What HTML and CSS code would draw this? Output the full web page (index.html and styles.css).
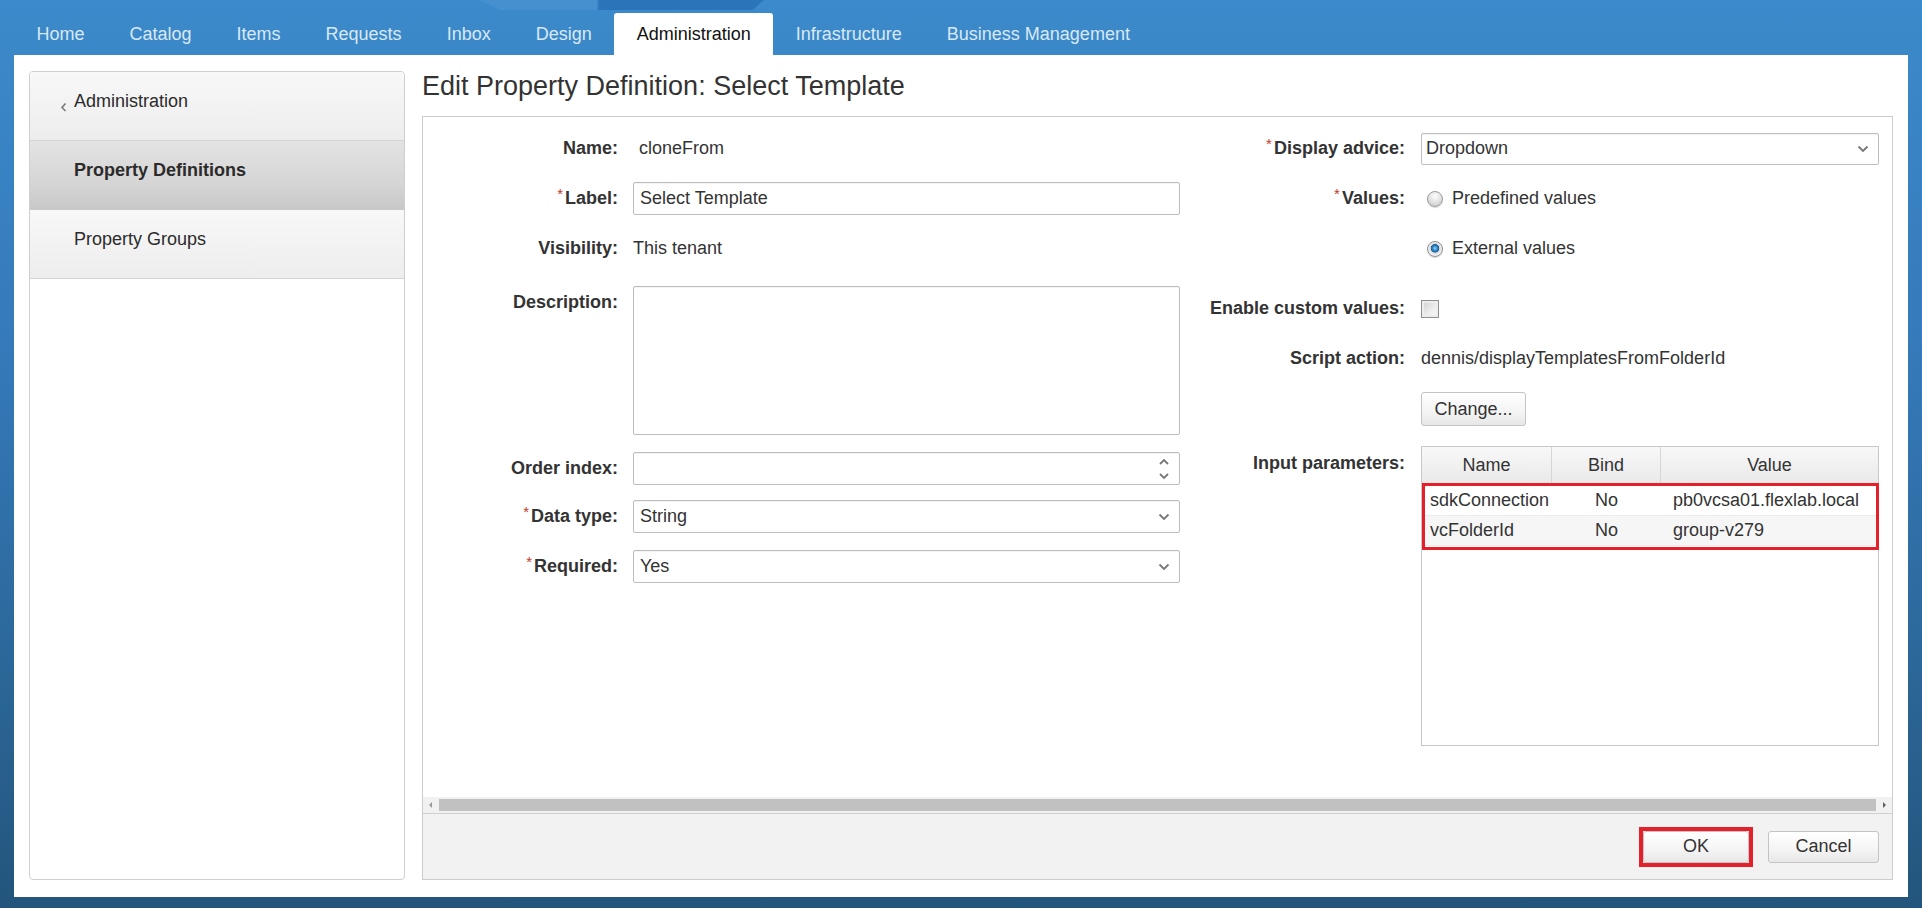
FILE: index.html
```html
<!DOCTYPE html>
<html lang="en">
<head>
  <meta charset="UTF-8">
  <title>Edit Property Definition</title>
  <link rel="stylesheet" href="styles.css">
</head>
<body>
  <div class="topbar">
    <nav class="tabs">
      <a class="tab">Home</a>
      <a class="tab">Catalog</a>
      <a class="tab">Items</a>
      <a class="tab">Requests</a>
      <a class="tab">Inbox</a>
      <a class="tab">Design</a>
      <a class="tab active">Administration</a>
      <a class="tab">Infrastructure</a>
      <a class="tab">Business Management</a>
    </nav>
  </div>

  <div class="page">
    <aside class="sidebar">
      <div class="side-item back">
        <svg class="chev" width="7" height="10" viewBox="0 0 7 10"><path d="M5.5 1.5 L2 5.5 L5.5 9" fill="none" stroke="#7a7a7a" stroke-width="1.6"/></svg>
        Administration
      </div>
      <div class="side-item selected">Property Definitions</div>
      <div class="side-item">Property Groups</div>
    </aside>

    <main class="editor">
      <h1 class="title">Edit Property Definition: Select Template</h1>

      <div class="panel">
        <div class="panel-body">
          <div class="form">
            <!-- left column -->
            <div class="col col-left">
              <div class="row">
                <label class="lbl">Name:</label>
                <div class="ctl"><span class="plain indent">cloneFrom</span></div>
              </div>
              <div class="row">
                <label class="lbl"><span class="req">*</span>Label:</label>
                <div class="ctl"><div class="input">Select Template</div></div>
              </div>
              <div class="row">
                <label class="lbl">Visibility:</label>
                <div class="ctl"><span class="plain">This tenant</span></div>
              </div>
              <div class="row row-top gap-desc">
                <label class="lbl">Description:</label>
                <div class="ctl"><div class="input textarea"></div></div>
              </div>
              <div class="row tight">
                <label class="lbl">Order index:</label>
                <div class="ctl">
                  <div class="input with-icon">
                    <span></span>
                    <svg class="spin" width="12" height="26" viewBox="0 0 12 26"><path d="M2 8 L6 4 L10 8 M2 18 L6 22 L10 18" fill="none" stroke="#777" stroke-width="1.8"/></svg>
                  </div>
                </div>
              </div>
              <div class="row">
                <label class="lbl"><span class="req">*</span>Data type:</label>
                <div class="ctl">
                  <div class="input with-icon">
                    <span>String</span>
                    <svg class="caret" width="12" height="8" viewBox="0 0 12 8"><path d="M1.5 1.5 L6 6 L10.5 1.5" fill="none" stroke="#777" stroke-width="1.8"/></svg>
                  </div>
                </div>
              </div>
              <div class="row">
                <label class="lbl"><span class="req">*</span>Required:</label>
                <div class="ctl">
                  <div class="input with-icon">
                    <span>Yes</span>
                    <svg class="caret" width="12" height="8" viewBox="0 0 12 8"><path d="M1.5 1.5 L6 6 L10.5 1.5" fill="none" stroke="#777" stroke-width="1.8"/></svg>
                  </div>
                </div>
              </div>
            </div>

            <!-- right column -->
            <div class="col col-right">
              <div class="row">
                <label class="lbl"><span class="req">*</span>Display advice:</label>
                <div class="ctl">
                  <div class="input with-icon select-sm">
                    <span>Dropdown</span>
                    <svg class="caret" width="12" height="8" viewBox="0 0 12 8"><path d="M1.5 1.5 L6 6 L10.5 1.5" fill="none" stroke="#777" stroke-width="1.8"/></svg>
                  </div>
                </div>
              </div>
              <div class="row">
                <label class="lbl"><span class="req">*</span>Values:</label>
                <div class="ctl"><span class="radio"></span><span class="plain">Predefined values</span></div>
              </div>
              <div class="row">
                <label class="lbl"></label>
                <div class="ctl"><span class="radio checked"></span><span class="plain">External values</span></div>
              </div>
              <div class="row gap-check">
                <label class="lbl">Enable custom values:</label>
                <div class="ctl"><span class="checkbox"></span></div>
              </div>
              <div class="row">
                <label class="lbl">Script action:</label>
                <div class="ctl"><span class="plain">dennis/displayTemplatesFromFolderId</span></div>
              </div>
              <div class="row">
                <label class="lbl"></label>
                <div class="ctl"><button class="btn btn-change">Change...</button></div>
              </div>
              <div class="row row-top gap-table">
                <label class="lbl lbl-table">Input parameters:</label>
                <div class="ctl">
                  <div class="params">
                    <div class="params-head">
                      <div>Name</div>
                      <div>Bind</div>
                      <div>Value</div>
                    </div>
                    <div class="params-rows">
                      <div class="params-row">
                        <div class="c-name">sdkConnection</div>
                        <div class="c-bind">No</div>
                        <div class="c-value">pb0vcsa01.flexlab.local</div>
                      </div>
                      <div class="params-row alt">
                        <div class="c-name">vcFolderId</div>
                        <div class="c-bind">No</div>
                        <div class="c-value">group-v279</div>
                      </div>
                    </div>
                  </div>
                </div>
              </div>
            </div>
          </div>
        </div>

        <div class="hscroll">
          <svg width="8" height="16" viewBox="0 0 8 16"><path d="M5 5 L2 8 L5 11 Z" fill="#9a9a9a"/></svg>
          <div class="thumb"></div>
          <svg width="8" height="16" viewBox="0 0 8 16"><path d="M3 5 L6 8 L3 11 Z" fill="#606060"/></svg>
        </div>

        <div class="panel-footer">
          <span class="ok-mark"><button class="btn btn-ok">OK</button></span>
          <button class="btn btn-cancel">Cancel</button>
        </div>
      </div>
    </main>
  </div>
</body>
</html>
```

FILE: styles.css
```css
body {
  margin: 0;
  font-family: "Liberation Sans", Arial, sans-serif;
  font-size: 18px;
  color: #333;
  background: linear-gradient(180deg, #3c8acb 0%, #3579b9 40%, #2b6697 75%, #23557c 100%);
  height: 908px;
  overflow: hidden;
}

/* top navigation */

.topbar {
  position: relative;
  height: 55px;
}

.topbar::before {
  content: '';
  position: absolute;
  left: 480px;
  top: 0;
  width: 284px;
  height: 10px;
  background: linear-gradient(90deg, #4690d0 0%, #4690d0 41%, #2c74ba 42%, #2c74ba 100%);
  clip-path: polygon(0 0, 100% 0, 96% 100%, 7% 100%);
}

.tabs {
  display: flex;
  align-items: flex-end;
  height: 55px;
  padding-left: 14px;
  box-sizing: border-box;
}

.tab {
  display: block;
  padding: 0 22.5px;
  height: 42px;
  line-height: 42px;
  color: #d9e8f6;
  cursor: pointer;
}

.tab.active {
  background: #fff;
  color: #111;
  border-radius: 3px 3px 0 0;
}

/* page frame */

.page {
  display: flex;
  gap: 17px;
  margin: 0 14px;
  height: 842px;
  padding: 16px 15px 17px 15px;
  box-sizing: border-box;
  background: #fff;
}

.sidebar {
  width: 376px;
  flex-shrink: 0;
  border: 1px solid #cfcfcf;
  border-radius: 4px;
  box-sizing: border-box;
  overflow: hidden;
}

.side-item {
  display: flex;
  align-items: center;
  height: 69px;
  padding-left: 44px;
  padding-bottom: 9px;
  box-sizing: border-box;
  border-bottom: 1px solid #d4d4d4;
  background: linear-gradient(180deg, #f8f8f8 0%, #ededed 100%);
  color: #2b2b2b;
}

.side-item.back {
  padding-left: 30px;
}

.side-item .chev {
  margin: 10px 7px 0 0;
}

.side-item.selected {
  font-weight: bold;
  background: linear-gradient(180deg, #e3e3e3 0%, #d6d6d6 60%, #c8c8c8 100%);
  border-bottom-color: #c9c9c9;
}

/* editor */

.editor {
  flex: 1;
  display: flex;
  flex-direction: column;
  min-width: 0;
}

.title {
  margin: 0 0 15px 0;
  font-size: 27px;
  line-height: 30px;
  font-weight: normal;
  color: #333;
}

.panel {
  flex: 1;
  display: flex;
  flex-direction: column;
  border: 1px solid #cccccc;
}

.panel-body {
  flex: 1;
}

.form {
  display: flex;
  padding-top: 15px;
}

.col {
  display: flex;
  flex-direction: column;
}

.row {
  display: flex;
  align-items: center;
  min-height: 33px;
  margin-bottom: 17px;
}

.row.tight {
  margin-bottom: 15px;
}

.row-top {
  align-items: flex-start;
}

.gap-desc { margin-top: 4px; }
.gap-check { margin-top: 10px; }
.gap-table { margin-top: 3px; }

.lbl {
  font-weight: bold;
  text-align: right;
  color: #333;
  flex-shrink: 0;
}

.row-top .lbl {
  padding-top: 6px;
}

.row-top .lbl-table {
  padding-top: 7px;
}

.req {
  color: #c0392b;
  font-weight: normal;
  font-size: 15px;
  position: relative;
  top: -5px;
  margin-right: 2px;
}

.col-left .lbl { width: 195px; margin-right: 15px; }
.col-left .ctl { width: 547px; }
.col-right .lbl { width: 225px; margin-right: 16px; }
.col-right .ctl { width: 458px; }

.ctl {
  display: flex;
  align-items: center;
}

.plain.indent {
  padding-left: 6px;
}

.input {
  width: 100%;
  height: 33px;
  box-sizing: border-box;
  border: 1px solid #bdbdbd;
  border-radius: 2px;
  padding: 0 6px;
  display: flex;
  align-items: center;
  background: #fff;
  box-shadow: inset 0 1px 1px rgba(0, 0, 0, 0.05);
}

.input.select-sm {
  height: 32px;
  padding-left: 4px;
}

.input.textarea {
  height: 149px;
}

.with-icon {
  justify-content: space-between;
}

.with-icon svg {
  margin-right: 3px;
}

.radio {
  width: 16px;
  height: 16px;
  margin: 0 9px 0 6px;
  border-radius: 50%;
  border: 1px solid #9c9c9c;
  box-sizing: border-box;
  background: radial-gradient(circle at 50% 30%, #fdfdfd 0%, #e2e2e2 50%, #c4c4c4 100%);
  box-shadow: 0 1px 1px rgba(0, 0, 0, 0.15);
}

.radio.checked {
  border-color: #8e8e8e;
  background: radial-gradient(circle at 50% 45%, #9fd0f2 0%, #2f8bd0 22%, #1b5e95 38%, #dadada 44%, #f4f4f4 68%, #c8c8c8 100%);
}

.checkbox {
  width: 18px;
  height: 18px;
  box-sizing: border-box;
  border: 1px solid #8f8f8f;
  background: linear-gradient(135deg, #cfcfcf 0%, #ececec 55%, #fafafa 100%);
  box-shadow: inset 0 0 0 2px #ededed;
}

.btn {
  font-family: "Liberation Sans", Arial, sans-serif;
  font-size: 18px;
  color: #333;
  border: 1px solid #c4c4c4;
  border-radius: 3px;
  background: linear-gradient(180deg, #ffffff 0%, #f4f4f4 60%, #e7e7e7 100%);
  cursor: pointer;
  padding: 0;
}

.btn-change {
  width: 105px;
  height: 34px;
}

/* input parameters grid */

.params {
  width: 100%;
  height: 300px;
  box-sizing: border-box;
  border: 1px solid #c8c8c8;
  background: #fff;
}

.params-head,
.params-row {
  display: grid;
  grid-template-columns: 130px 109px 1fr;
}

.params-head {
  height: 37px;
  background: linear-gradient(180deg, #f8f8f8 0%, #e9e9e9 100%);
  border-bottom: 1px solid #cfcfcf;
}

.params-head div {
  display: flex;
  align-items: center;
  justify-content: center;
  border-right: 1px solid #d6d6d6;
}

.params-head div:last-child {
  border-right: none;
}

.params-rows {
  position: relative;
}

.params-rows::after {
  content: '';
  position: absolute;
  top: -2px;
  left: 0;
  right: -1px;
  bottom: -4px;
  border: 3px solid #e4212b;
  pointer-events: none;
}

.params-row {
  height: 30px;
  align-items: center;
  border-bottom: 1px solid #ececec;
}

.params-row.alt {
  height: 29px;
  background: #f6f6f6;
}

.c-name { padding-left: 8px; }
.c-bind { text-align: center; }
.c-value { padding-left: 12px; }

/* horizontal scrollbar */

.hscroll {
  display: flex;
  align-items: center;
  height: 16px;
  background: #f1f1f1;
  padding: 0 4px;
}

.hscroll .thumb {
  flex: 1;
  height: 12px;
  background: #c1c1c1;
  margin: 0 4px;
}

/* footer */

.panel-footer {
  display: flex;
  align-items: center;
  justify-content: flex-end;
  gap: 15px;
  height: 65px;
  padding-right: 13px;
  background: #f2f2f2;
  border-top: 1px solid #cfcfcf;
}

.ok-mark {
  display: flex;
  border: 4px solid #e4212b;
}

.btn-ok {
  width: 106px;
  height: 32px;
}

.btn-cancel {
  width: 111px;
  height: 32px;
}
```
